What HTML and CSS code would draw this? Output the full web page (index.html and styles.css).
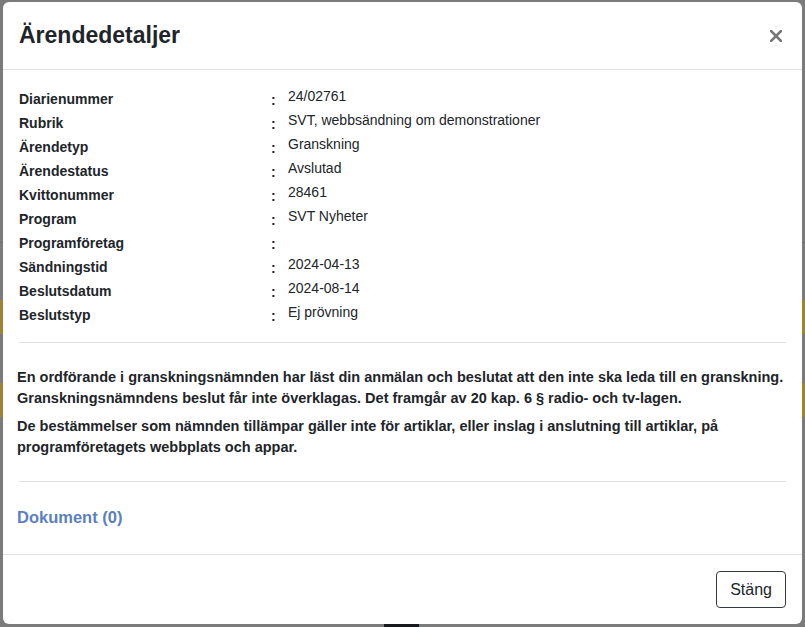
FILE: index.html
```html
<!DOCTYPE html>
<html lang="sv">
<head>
    <meta charset="UTF-8">
    <meta name="viewport" content="width=device-width, initial-scale=1.0">
    <title>Ärendedetaljer</title>
    <link rel="stylesheet" href="styles.css">
</head>
<body>

    <div class="backdrop">
        <div class="bg-line bg-line-1"></div>
        <div class="bg-band bg-band-1"></div>
        <div class="bg-band bg-band-2"></div>
        <div class="bg-dark"></div>
    </div>

    <div class="modal">
        <div class="modal-header">
            <h1 class="modal-title">Ärendedetaljer</h1>
            <button class="close" aria-label="Stäng">
                <svg width="12" height="12" viewBox="0 0 12 12">
                    <path d="M1 1 L11 11 M11 1 L1 11" stroke="#777" stroke-width="2.6" stroke-linecap="square"/>
                </svg>
            </button>
        </div>

        <div class="modal-body">
            <div class="details">
                <div class="row"><span class="label">Diarienummer</span><span class="colon">:</span><span class="value">24/02761</span></div>
                <div class="row"><span class="label">Rubrik</span><span class="colon">:</span><span class="value">SVT, webbsändning om demonstrationer</span></div>
                <div class="row"><span class="label">Ärendetyp</span><span class="colon">:</span><span class="value">Granskning</span></div>
                <div class="row"><span class="label">Ärendestatus</span><span class="colon">:</span><span class="value">Avslutad</span></div>
                <div class="row"><span class="label">Kvittonummer</span><span class="colon">:</span><span class="value">28461</span></div>
                <div class="row"><span class="label">Program</span><span class="colon">:</span><span class="value">SVT Nyheter</span></div>
                <div class="row"><span class="label">Programföretag</span><span class="colon">:</span><span class="value"></span></div>
                <div class="row"><span class="label">Sändningstid</span><span class="colon">:</span><span class="value">2024-04-13</span></div>
                <div class="row"><span class="label">Beslutsdatum</span><span class="colon">:</span><span class="value">2024-08-14</span></div>
                <div class="row"><span class="label">Beslutstyp</span><span class="colon">:</span><span class="value">Ej prövning</span></div>
            </div>

            <hr class="sep sep-top">

            <div class="decision">
                <p>En ordförande i granskningsnämnden har läst din anmälan och beslutat att den inte ska leda till en granskning. Granskningsnämndens beslut får inte överklagas. Det framgår av 20 kap. 6 § radio- och tv-lagen.</p>
                <p>De bestämmelser som nämnden tillämpar gäller inte för artiklar, eller inslag i anslutning till artiklar, på programföretagets webbplats och appar.</p>
            </div>

            <hr class="sep sep-bottom">

            <h2 class="documents">Dokument (0)</h2>
        </div>

        <div class="modal-footer">
            <button class="btn">Stäng</button>
        </div>
    </div>

</body>
</html>
```

FILE: styles.css
```css
body {
    margin: 0;
    font-family: "Liberation Sans", Arial, sans-serif;
    color: #212529;
    background-color: #7b7b7b;
    height: 627px;
    overflow: hidden;
    position: relative;
}
/* Sidan bakom dialogen */
.backdrop {
    position: absolute;
    inset: 0;
}
.bg-line {
    position: absolute;
    left: 0;
    right: 0;
    height: 1px;
    background: #6e6e6e;
}
.bg-line-1 { top: 242px; }
.bg-band {
    position: absolute;
    left: 0;
    right: 0;
    height: 34px;
    background: #a08432;
}
.bg-band-1 { top: 300px; }
.bg-band-2 { top: 383px; }
.bg-dark {
    position: absolute;
    left: 384px;
    width: 35px;
    bottom: 0;
    height: 4px;
    background: #161a1f;
}
/* Dialogen */
.modal {
    position: relative;
    margin: 2px 3px 0 3px;
    width: 799px;
    height: 622px;
    background: #fff;
    border-radius: 6px;
    display: flex;
    flex-direction: column;
}
.modal-header {
    display: flex;
    justify-content: space-between;
    align-items: center;
    padding: 16px;
    border-bottom: 1px solid #dee2e6;
}
.modal-title {
    margin: 0;
    font-size: 23px;
    line-height: 35px;
    font-weight: bold;
}
.close {
    background: none;
    border: none;
    padding: 0;
    margin-right: 4px;
    display: flex;
    cursor: pointer;
}
.modal-body {
    padding: 16px 16px 23px 16px;
    flex: 1;
}
.row {
    display: flex;
    height: 24px;
    font-size: 14px;
}
.label {
    width: 252px;
    font-weight: bold;
    padding-top: 3px;
    line-height: 20px;
}
.colon {
    width: 17px;
    padding-top: 4px;
    line-height: 20px;
    font-weight: bold;
}
.value {
    line-height: 20px;
}
.sep {
    border: none;
    border-top: 1px solid #dee2e6;
    margin: 0;
}
.sep-top {
    margin-top: 16px;
    margin-bottom: 24px;
}
.decision {
    margin-left: -2px;
}
.decision p {
    margin: 0 0 7px 0;
    font-size: 14.5px;
    line-height: 21px;
    font-weight: bold;
}
.decision p:last-child {
    margin-bottom: 0;
}
.sep-bottom {
    margin-top: 23px;
    margin-bottom: 23px;
}
.documents {
    margin: 0 0 0 -2px;
    font-size: 16.5px;
    line-height: 24px;
    color: #5b7fc0;
}
.modal-footer {
    display: flex;
    justify-content: flex-end;
    padding: 16px;
    border-top: 1px solid #dee2e6;
}
.btn {
    font-family: "Liberation Sans", Arial, sans-serif;
    font-size: 16px;
    line-height: 23px;
    padding: 6px 13px;
    background: #fff;
    color: #212529;
    border: 1px solid #343a40;
    border-radius: 4px;
    cursor: pointer;
}
```
